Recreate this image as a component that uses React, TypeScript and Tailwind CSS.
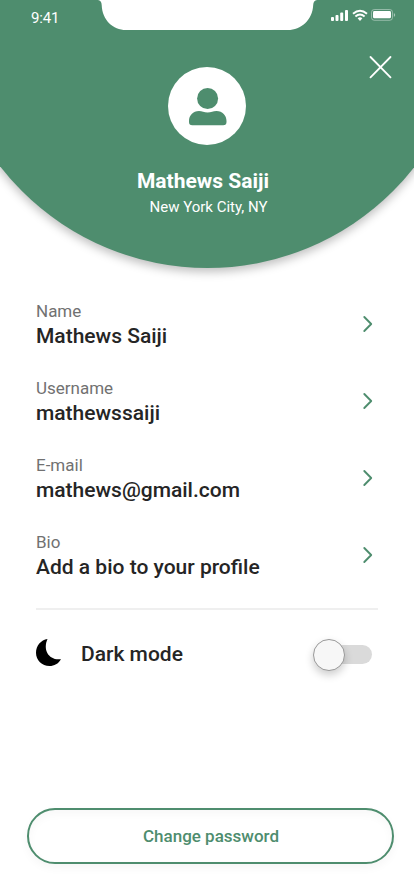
import React from "react";

const fields = [
  { label: "Name", value: "Mathews Saiji" },
  { label: "Username", value: "mathewssaiji" },
  { label: "E-mail", value: "mathews@gmail.com" },
  { label: "Bio", value: "Add a bio to your profile" },
];

function Notch() {
  return (
    <svg className="absolute left-[96px] top-0" width="224" height="30" viewBox="0 0 224 30" fill="#fff">
      <path d="M2 0Q5.500 .5 5.700 5C6.200 20 17 30 30 30H192C205 30 216.500 20 217.200 5Q217.400 .5 221 0Z" />
    </svg>
  );
}

function StatusIcons() {
  return (
    <svg width="66" height="14" viewBox="330 8 66 14" fill="#fff">
      <rect x="331" y="17" width="3" height="4" rx=".9" />
      <rect x="335.500" y="15" width="3" height="6" rx=".9" />
      <rect x="340.200" y="12.500" width="3" height="8.500" rx=".9" />
      <rect x="345" y="10" width="3" height="11" rx=".9" />
      <g fill="none" stroke="#fff" strokeWidth="2">
        <path d="M353 13.800Q360 7.800 367 13.800" />
        <path d="M355.400 16.500Q360 12.600 364.600 16.500" />
      </g>
      <path d="M357.600 18.200Q360 16.300 362.400 18.200L360 20.900Z" />
      <rect x="371.500" y="9.500" width="21" height="10.800" rx="2.800" fill="none" stroke="#fff" strokeOpacity=".4" />
      <rect x="373" y="11" width="18" height="7.300" rx="1.400" />
      <path d="M393.900 13Q395.200 13.800 395.200 15Q395.200 16.200 393.900 17Z" fillOpacity=".5" />
    </svg>
  );
}

function Avatar() {
  return (
    <div className="ml-[168px] mt-[67px] h-[78px] w-[78px] rounded-full bg-white">
      <svg width="78" height="78" viewBox="168 67 78 78" fill="#4e8d6e">
        <circle cx="207.600" cy="98.500" r="10.500" />
        <path d="M199 111C202 111 204 112.500 207.600 112.500S213 111 216.500 111C222.500 111 226.500 115.500 226.500 121V122Q226.500 125.300 223.200 125.300H192.300Q189 125.300 189 122V121C189 115.500 193 111 199 111Z" />
      </svg>
    </div>
  );
}

function Header() {
  return (
    <header className="relative h-[290px] overflow-hidden text-white">
      <div className="absolute left-[-55.500px] top-[-257px] h-[525px] w-[525px] rounded-full bg-[#4e8d6e] shadow-[0_4px_10px_rgba(0,0,0,0.25)]" />
      <Notch />
      <div className="absolute inset-x-0 top-[8px] flex items-start justify-between pl-[31px] pr-[18px]">
        <span className="text-[15px] leading-5 tracking-[-0.2px]">9:41</span>
        <StatusIcons />
      </div>
      <button className="absolute left-[368px] top-[55px]" aria-label="Close">
        <svg width="25" height="25" viewBox="0 0 25 25" stroke="#fff" strokeWidth="1.800" strokeLinecap="round">
          <path d="M2.500 2L22.500 22.300M22.500 2L2.500 22.300" />
        </svg>
      </button>
      <div className="relative">
        <Avatar />
        <div className="mr-[145px] mt-[23px] text-right">
          <h1 className="text-[21px] font-bold leading-[26px]">Mathews Saiji</h1>
          <p className="pr-[1.500px] text-[15px] leading-[26px]">New York City, NY</p>
        </div>
      </div>
    </header>
  );
}

export default function App() {
  return (
    <div className="flex h-[896px] w-[414px] flex-col overflow-hidden bg-white font-['Roboto',sans-serif] text-[#252525]">
      <Header />
      <main className="px-9 pt-[9px]">
        {fields.map((field) => (
          <button key={field.label} className="flex h-[77px] w-full items-start justify-between text-left">
            <span className="flex flex-col">
              <span className="text-[17px] leading-6 text-[#717171]">{field.label}</span>
              <span className="text-[21px] font-medium leading-[26px]">{field.value}</span>
            </span>
            <svg className="mr-[4px] mt-[16px]" width="12" height="18" viewBox="0 0 12 18" fill="none" stroke="#4e8d6e" strokeWidth="1.900" strokeLinecap="round" strokeLinejoin="round">
              <path d="M2.300 2L9.200 9L2.300 16" />
            </svg>
          </button>
        ))}
        <div className="mt-[1px] h-[2px] w-[342px] bg-[#efefef]" />
        <div className="mt-[28px] flex h-[34px] items-start">
          <svg className="mt-[1px]" width="27" height="28" viewBox="0 0 27 28" fill="#000">
            <path d="M11.500 0C6.500 11 13 21.800 25 20.200C22.300 24.700 18.300 27 13.500 27C6 27 0 21.200 0 13.700C0 6.700 5 1 11.500 0Z" />
          </svg>
          <span className="ml-[18px] mt-[3px] text-[21px] font-medium leading-[26px]">Dark mode</span>
          <button className="ml-auto mr-[6px] mt-[7px] flex h-[19px] w-[56px] items-start rounded-full bg-[#dadada]" role="switch" aria-checked="false" aria-label="Dark mode">
            <span className="-ml-[3px] -mt-[6px] h-8 w-8 shrink-0 rounded-full border border-[#999] bg-[#f7f7f7] shadow-[0_4px_8px_rgba(0,0,0,0.2)]" />
          </button>
        </div>
      </main>
      <button className="mb-8 ml-[27px] mt-auto h-[56px] w-[367px] shrink-0 rounded-[28px] border-2 border-[#4e8d6e] pl-px pt-[2px] text-[17px] font-medium text-[#4e8d6e] shadow-[0_4px_10px_rgba(0,0,0,0.04),inset_0_4px_10px_rgba(0,0,0,0.03)]">
        Change password
      </button>
    </div>
  );
}
